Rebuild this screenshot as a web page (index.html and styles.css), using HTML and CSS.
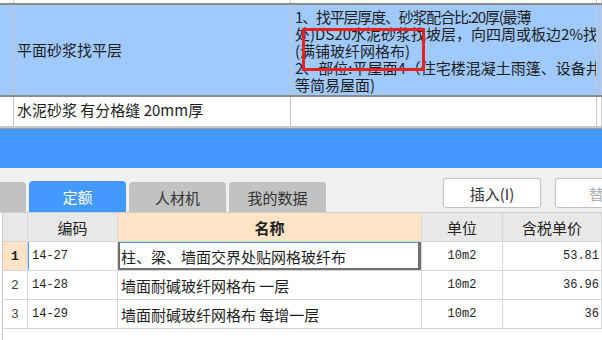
FILE: index.html
```html
<!DOCTYPE html>
<html lang="zh">
<head>
<meta charset="utf-8">
<link rel="stylesheet" href="styles.css">
</head>
<body>
<div class="top">
  <div class="trow strip">
    <div class="c c0"></div><div class="c c1"></div><div class="c c2"></div><div class="c c3"></div>
  </div>
  <div class="trow sel">
    <div class="c c0"></div>
    <div class="c c1 name">平面砂浆找平层</div>
    <div class="c c2 desc">
      <div class="dl tight">1、找平层厚度、砂浆配合比:20厚(最薄</div>
      <div class="dl">处)DS20水泥砂浆找坡层，向四周或板边2%找坡</div>
      <div class="dl">(满铺玻纤网格布)</div>
      <div class="dl">2、部位:平屋面4（住宅楼混凝土雨篷、设备井</div>
      <div class="dl">等简易屋面)</div>
      <div class="mark"></div>
    </div>
    <div class="c c3"></div>
  </div>
  <div class="trow plain">
    <div class="c c0"></div>
    <div class="c c1 name">水泥砂浆 有分格缝 20mm厚</div>
    <div class="c c2"></div>
    <div class="c c3"></div>
  </div>
</div>
<div class="bluebar"></div>
<div class="toolbar">
  <div class="tabs">
    <div class="tab stub"></div>
    <div class="tab active">定额</div>
    <div class="tab">人材机</div>
    <div class="tab">我的数据</div>
  </div>
  <div class="btns">
    <div class="btn">插入(I)</div>
    <div class="btn off">替换</div>
  </div>
</div>
<div class="grid">
  <div class="h"></div>
  <div class="h">编码</div>
  <div class="h hname">名称</div>
  <div class="h">单位</div>
  <div class="h">含税单价</div>

  <div class="n cur">1</div>
  <div class="code fcode">14-27</div>
  <div class="nm focus">柱、梁、墙面交界处贴网格玻纤布</div>
  <div class="u">10m2</div>
  <div class="p">53.81</div>

  <div class="n">2</div>
  <div class="code">14-28</div>
  <div class="nm">墙面耐碱玻纤网格布 一层</div>
  <div class="u">10m2</div>
  <div class="p">36.96</div>

  <div class="n">3</div>
  <div class="code">14-29</div>
  <div class="nm">墙面耐碱玻纤网格布 每增一层</div>
  <div class="u">10m2</div>
  <div class="p">36</div>
</div>
</body>
</html>
```
FILE: styles.css
```css
* { box-sizing: border-box; }
html, body { margin: 0; padding: 0; }
body {
  width: 602px;
  height: 340px;
  overflow: hidden;
  background: #ffffff;
  font-family: "Noto Sans CJK SC", "Liberation Sans", sans-serif;
  font-size: 15px;
  color: #1e1e1e;
}
.top { background: #ffffff; }
.trow {
  display: grid;
  grid-template-columns: 14px 277px 306px 1fr;
}
.c { border-right: 1px solid #c8c8c8; overflow: hidden; }
.strip { height: 3px; }
.sel {
  height: 94px;
  background: #a0c9fd;
  border-top: 2px solid #8a8a8a;
  border-bottom: 2px solid #8a8a8a;
}
.plain {
  height: 31px;
  border-bottom: 2px solid #c8c8c8;
}
.name {
  display: flex;
  align-items: center;
  padding-left: 3px;
  white-space: nowrap;
  line-height: 18px;
}
.plain .name { padding-bottom: 3px; }
.desc {
  position: relative;
  padding: 3px 0 0 4px;
}
.dl {
  white-space: nowrap;
  line-height: 17px;
  height: 17px;
}
.dl.tight { letter-spacing: -1.2px; }
.mark {
  position: absolute;
  left: 11px;
  top: 23px;
  width: 123px;
  height: 43px;
  border: 3px solid #e8221f;
}
.bluebar {
  height: 40px;
  background: #4398fd;
  border-top: 1px solid #9a9a9a;
}
.toolbar {
  height: 45px;
  background: #f0f0f0;
  display: flex;
  justify-content: space-between;
  border-bottom: 1px solid #d0d0d0;
}
.tabs {
  display: flex;
  align-items: flex-end;
  gap: 3px;
}
.tab {
  width: 97px;
  height: 30px;
  background: #c2c2c2;
  border-radius: 4px 4px 0 0;
  display: flex;
  align-items: center;
  justify-content: center;
  color: #333;
}
.tab.stub { width: 26px; border-radius: 0 4px 0 0; }
.tab.active { background: #4399fd; color: #ffffff; height: 31px; }
.btns {
  display: flex;
  gap: 14px;
  padding-top: 10px;
  margin-right: -51px;
}
.btn {
  width: 98px;
  height: 30px;
  background: #ffffff;
  border: 1px solid #c4c4c4;
  border-radius: 3px;
  display: flex;
  align-items: center;
  justify-content: center;
  color: #333;
}
.btn.off { color: #b0b0b0; }
.grid {
  display: grid;
  grid-template-columns: 25px 90px 304px 81px 1fr;
  grid-auto-rows: 29px;
  margin-left: 2px;
  border-left: 1px solid #c8c8c8;
  height: 127px;
  background: #ffffff;
}
.grid > div {
  border-right: 1px solid #d6d6d6;
  border-bottom: 1px solid #d6d6d6;
  display: flex;
  align-items: center;
  white-space: nowrap;
  overflow: hidden;
}
.h {
  background: #e8e8e8;
  justify-content: center;
  color: #222;
}
.h.hname { background: #fde4c6; font-weight: bold; }
.n {
  justify-content: center;
  font-family: "Liberation Mono", monospace;
  font-size: 13px;
  color: #444;
  background: #ffffff;
}
.n.cur { background: #fde4c6; font-weight: bold; color: #222; }
.code {
  padding-left: 4px;
  font-family: "Liberation Mono", monospace;
  font-size: 12px;
}
.code.fcode { box-shadow: inset 1px 0 0 #4a9cf5; }
.nm { padding-left: 3px; }
.nm.focus {
  box-shadow: inset 2px 0 0 #707070, inset -3px 0 0 #707070, inset 0 -2px 0 #707070, inset 0 1px 0 #4a9cf5;
}
.u {
  justify-content: center;
  font-family: "Liberation Mono", monospace;
  font-size: 12px;
}
.p {
  justify-content: flex-end;
  padding-right: 2px;
  font-family: "Liberation Mono", monospace;
  font-size: 12px;
}
```
